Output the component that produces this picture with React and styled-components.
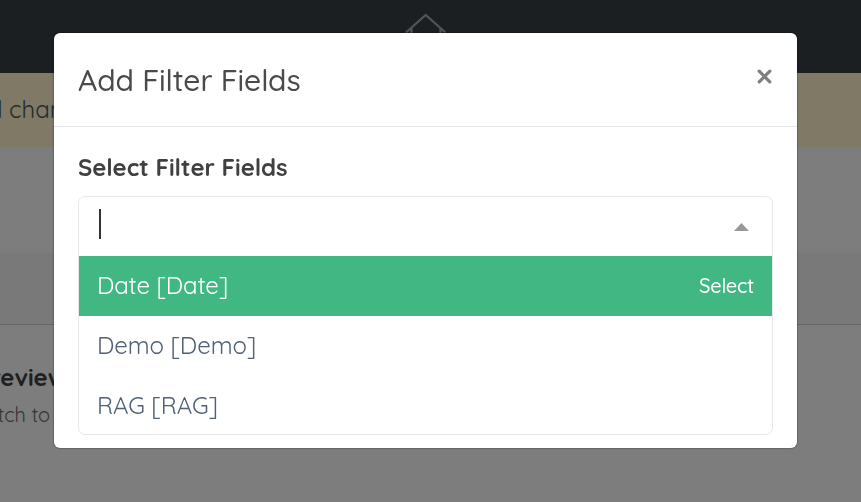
import React from "react";
import styled, { createGlobalStyle } from "styled-components";

const GlobalStyle = createGlobalStyle`
  * {
    box-sizing: border-box;
  }
  body {
    margin: 0;
    overflow: hidden;
    font-family: Quicksand, Lato, sans-serif;
    color: #404041;
  }
`;

const Page = styled.div`
  height: 502px;
  overflow: hidden;
  background: #f8fbf9;
`;

const Navbar = styled.div`
  height: 73px;
  padding: 13px 0 0 405px;
  background: #363e43;
`;

const Banner = styled.div`
  height: 74px;
  padding-top: 20px;
  background: #fff3cd;
  color: #455a64;
  font-size: 24px;
  line-height: 33px;
  white-space: nowrap;
`;

const BannerText = styled.div`
  margin-left: -12px;
`;

const Toolbar = styled.div`
  height: 72px;
  margin-top: 106px;
  background: #f0f3f1;
  border-bottom: 1px solid #c8cbca;
`;

const Preview = styled.div`
  padding-top: 37px;
  white-space: nowrap;
`;

const PreviewTitle = styled.div`
  margin-left: -24px;
  font-size: 24px;
  font-weight: 700;
  line-height: 30px;
`;

const PreviewText = styled.div`
  margin: 8px 0 0 -33px;
  font-size: 20px;
  line-height: 30px;
  color: #6c6c70;
`;

const Overlay = styled.div`
  position: fixed;
  inset: 0;
  padding: 33px 0 0 54px;
  background: rgba(0, 0, 0, 0.5);
`;

const Modal = styled.div`
  width: 743px;
  height: 415px;
  background: #fff;
  border-radius: 6px;
  box-shadow: 0 0 2px rgba(0, 0, 0, 0.65);
`;

const Header = styled.div`
  display: flex;
  justify-content: space-between;
  height: 94px;
  padding: 28px 25px 0 24px;
  border-bottom: 1px solid #e1e5e9;
`;

const Title = styled.div`
  font-size: 30px;
  font-weight: 500;
  line-height: 38px;
  letter-spacing: -0.07px;
  color: #4a4a4b;
`;

const CloseButton = styled.button`
  height: 15px;
  margin-top: 8px;
  padding: 0;
  border: 0;
  background: none;
  svg {
    display: block;
  }
`;

const Body = styled.div`
  padding: 25px 24px 0;
`;

const Label = styled.div`
  margin-bottom: 14px;
  font-size: 24px;
  font-weight: 700;
  line-height: 30px;
  letter-spacing: -0.06px;
`;

const Select = styled.div`
  width: 695px;
  height: 239px;
  border: 1px solid #e8e8e8;
  border-radius: 7px;
`;

const Search = styled.div`
  display: flex;
  justify-content: space-between;
  height: 59px;
  padding: 12px 23px 0 20px;
  svg {
    margin-top: 14px;
  }
`;

const Caret = styled.div`
  width: 1.5px;
  height: 30px;
  background: #333;
`;

const Option = styled.div`
  display: flex;
  align-items: center;
  justify-content: space-between;
  height: 60px;
  padding: 0 18px 2px;
  background: ${({ $active }) => ($active ? "#41b883" : "transparent")};
  color: ${({ $active }) => ($active ? "#fff" : "#526175")};
  font-size: 24px;
  letter-spacing: -0.1px;
`;

const Hint = styled.span`
  font-size: 20px;
  font-weight: 500;
  letter-spacing: -0.3px;
`;

const options = [
  { name: "Date [Date]", active: true },
  { name: "Demo [Demo]" },
  { name: "RAG [RAG]" },
];

export default () => {
  return (
    <>
      <GlobalStyle />
      <Page>
        <Navbar>
          <svg width="42" height="40" viewBox="0 0 42 40" fill="none" stroke="#a4a7a9" strokeWidth="2.3">
            <path d="M1 19.5 20.7 2 40.5 19.5M6.5 15v23h29V15" />
          </svg>
        </Navbar>
        <Banner>
          <BannerText>d changes</BannerText>
        </Banner>
        <Toolbar />
        <Preview>
          <PreviewTitle>Preview</PreviewTitle>
          <PreviewText>Switch to</PreviewText>
        </Preview>
      </Page>
      <Overlay>
        <Modal>
          <Header>
            <Title>Add Filter Fields</Title>
            <CloseButton aria-label="Close">
              <svg width="15" height="15" viewBox="0 0 15 15" stroke="#7f7f7f" strokeWidth="3.3" strokeLinecap="round">
                <path d="m2.2 2.2 10.6 10.6M12.8 2.2 2.2 12.8" />
              </svg>
            </CloseButton>
          </Header>
          <Body>
            <Label>Select Filter Fields</Label>
            <Select>
              <Search>
                <Caret />
                <svg width="15" height="8" viewBox="0 0 15 8" fill="#999">
                  <path d="M0 8 7.5 0 15 8Z" />
                </svg>
              </Search>
              {options.map(({ name, active }) => (
                <Option key={name} $active={active}>
                  <span>{name}</span>
                  {active && <Hint>Select</Hint>}
                </Option>
              ))}
            </Select>
          </Body>
        </Modal>
      </Overlay>
    </>
  );
};
